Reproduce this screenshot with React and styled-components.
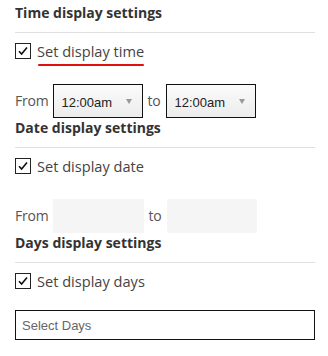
import React from "react";
import styled, { createGlobalStyle } from "styled-components";

const Global = createGlobalStyle`
  body {
    margin: 0;
    background: #fff;
    font-family: "Open Sans", "Liberation Sans", sans-serif;
  }
`;

const Panel = styled.div`
  width: 300px;
  padding: 3px 0 0 15px;
`;

const Section = styled.section`
  display: flex;
  flex-direction: column;
`;

const Heading = styled.h3`
  margin: 0;
  font-size: 14px;
  font-weight: 700;
  line-height: 20px;
  color: #333;
  padding-bottom: 9px;
  border-bottom: 1px solid #e0e0e0;
`;

const CheckRow = styled.label`
  display: flex;
  align-items: center;
  height: 16px;
  margin-top: 10px;
`;

const Box = styled.span`
  width: 14px;
  height: 14px;
  border: 1px solid #222;
  display: flex;
  align-items: center;
  justify-content: center;
  background: #fff;
`;

const LabelText = styled.span`
  margin-left: 6px;
  font-size: 14.6px;
  color: #444;
  position: relative;
  line-height: 16px;
  ${(p) =>
    p.$underline &&
    `
    &::after {
      content: "";
      position: absolute;
      left: 1px;
      right: 0;
      top: 21px;
      height: 2px;
      border-radius: 1px;
      background: #e01010;
    }
  `}
`;

const FieldRow = styled.div`
  display: flex;
  align-items: center;
  margin-top: ${(p) => p.$top}px;
`;

const Word = styled.span`
  font-size: 14px;
  letter-spacing: -0.2px;
  color: #555;
  margin: ${(p) => (p.$to ? "0 5px 0 5px" : "0 4px 0 0")};
  padding-bottom: 2px;
`;

const Select = styled.div`
  border: 1px solid #111;
  background: linear-gradient(#fbfbfb, #ececec);
  display: flex;
  align-items: center;
  justify-content: space-between;
  padding: 3px 10px 0 8px;
  width: 70px;
  height: 29px;
  font-family: "Liberation Sans", Arial, sans-serif;
  font-size: 13px;
  color: #222;
`;

const Arrow = styled.span`
  width: 0;
  height: 0;
  border-left: 3px solid transparent;
  border-right: 3px solid transparent;
  border-top: 5px solid #999;
  margin-top: -2px;
`;

const DateInput = styled.div`
  width: ${(p) => p.$w}px;
  height: 34px;
  background: #f5f5f5;
`;

const DaysInput = styled.div`
  margin-top: 21px;
  height: 28px;
  border: 1px solid #111;
  display: flex;
  align-items: center;
  padding-left: 6px;
  font-family: "Liberation Sans", Arial, sans-serif;
  font-size: 13px;
  color: #666;
`;

function Check({ label, underline }) {
  return (
    <CheckRow>
      <Box>
        <svg width="12" height="12" viewBox="0 0 12 12">
          <path d="M2 6.2 L4.6 9 L10 2.6" fill="none" stroke="#111" strokeWidth="1.6" />
        </svg>
      </Box>
      <LabelText $underline={underline}>{label}</LabelText>
    </CheckRow>
  );
}

function TimeSelect() {
  return (
    <Select>
      <span>12:00am</span>
      <Arrow />
    </Select>
  );
}

export default function App() {
  return (
    <>
      <Global />
      <Panel>
        <Section>
          <Heading>Time display settings</Heading>
          <Check label="Set display time" underline />
          <FieldRow $top={25}>
            <Word>From</Word>
            <TimeSelect />
            <Word $to>to</Word>
            <TimeSelect />
          </FieldRow>
        </Section>
        <Section>
          <Heading>Date display settings</Heading>
          <Check label="Set display date" />
          <FieldRow $top={25}>
            <Word>From</Word>
            <DateInput $w={91} />
            <Word $to>to</Word>
            <DateInput $w={90} />
          </FieldRow>
        </Section>
        <Section>
          <Heading>Days display settings</Heading>
          <Check label="Set display days" />
          <DaysInput>Select Days</DaysInput>
        </Section>
      </Panel>
    </>
  );
}
